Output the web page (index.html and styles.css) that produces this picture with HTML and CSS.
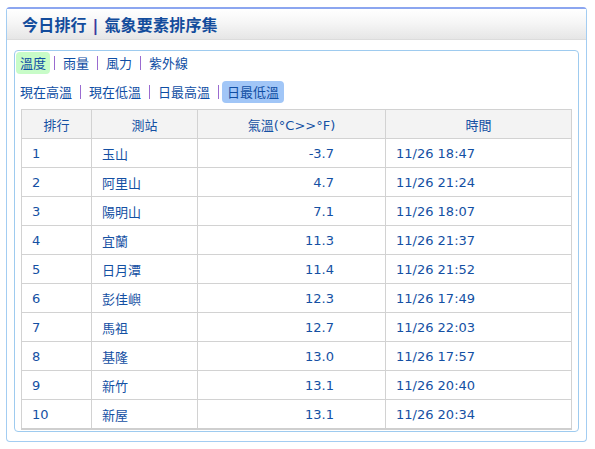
FILE: index.html
```html
<!DOCTYPE html>
<html lang="zh-Hant">
<head>
<meta charset="utf-8">
<title>今日排行</title>
<link rel="stylesheet" href="styles.css">
</head>
<body>
<div class="panel">
  <div class="panel-head">
    <h1 class="title">今日排行 <span class="title-sep">|</span> 氣象要素排序集</h1>
  </div>
  <div class="inner">
    <div class="tabs tabs-main">
      <span class="tab tab-on-green">溫度</span><span class="sep"></span><span class="tab">雨量</span><span class="sep"></span><span class="tab">風力</span><span class="sep"></span><span class="tab">紫外線</span>
    </div>
    <div class="tabs tabs-sub">
      <span class="tab">現在高溫</span><span class="sep"></span><span class="tab">現在低溫</span><span class="sep"></span><span class="tab">日最高溫</span><span class="sep"></span><span class="tab tab-on-blue">日最低溫</span>
    </div>
    <table class="rank">
      <thead>
        <tr><th class="c1">排行</th><th class="c2">測站</th><th class="c3">氣溫(°C&gt;&gt;°F)</th><th class="c4">時間</th></tr>
      </thead>
      <tbody>
        <tr><td>1</td><td>玉山</td><td class="num">-3.7</td><td>11/26 18:47</td></tr>
        <tr><td>2</td><td>阿里山</td><td class="num">4.7</td><td>11/26 21:24</td></tr>
        <tr><td>3</td><td>陽明山</td><td class="num">7.1</td><td>11/26 18:07</td></tr>
        <tr><td>4</td><td>宜蘭</td><td class="num">11.3</td><td>11/26 21:37</td></tr>
        <tr><td>5</td><td>日月潭</td><td class="num">11.4</td><td>11/26 21:52</td></tr>
        <tr><td>6</td><td>彭佳嶼</td><td class="num">12.3</td><td>11/26 17:49</td></tr>
        <tr><td>7</td><td>馬祖</td><td class="num">12.7</td><td>11/26 22:03</td></tr>
        <tr><td>8</td><td>基隆</td><td class="num">13.0</td><td>11/26 17:57</td></tr>
        <tr><td>9</td><td>新竹</td><td class="num">13.1</td><td>11/26 20:40</td></tr>
        <tr><td>10</td><td>新屋</td><td class="num">13.1</td><td>11/26 20:34</td></tr>
      </tbody>
    </table>
  </div>
</div>
</body>
</html>
```

FILE: styles.css
```css
html, body {
  margin: 0;
  padding: 0;
  background: #ffffff;
}

body {
  font-family: "DejaVu Sans", "Noto Sans CJK TC", sans-serif;
  font-size: 13px;
  color: #1450a3;
}

.panel {
  margin: 7px 0 0 6px;
  width: 581px;
  height: 435px;
  box-sizing: border-box;
  border: 1px solid #a3cdf2;
  border-top: 2px solid #8ca6f0;
  border-radius: 4px;
  padding: 0 7px 9px 7px;
  display: flex;
  flex-direction: column;
}

.panel-head {
  flex-shrink: 0;
  margin: 0 -7px;
  height: 30px;
  border-bottom: 1px solid #dcdcdc;
  background: linear-gradient(#ffffff 0%, #f6f6f6 45%, #e6e6e6 100%);
  display: flex;
  align-items: center;
  padding-left: 15px;
}

.title {
  margin: 0;
  font-family: "DejaVu Sans", "Noto Sans CJK TC", sans-serif;
  font-size: 16px;
  font-weight: bold;
  color: #134c9c;
  letter-spacing: 0.2px;
}

.title-sep {
  color: #3a3c9e;
}

.inner {
  margin-top: 10px;
  flex: 1;
  min-height: 0;
  border: 1px solid #9ecbef;
  border-radius: 4px;
  padding: 1px 6px 0 0;
  display: flex;
  flex-direction: column;
}

.tabs {
  flex-shrink: 0;
  display: flex;
  align-items: center;
  height: 22px;
}

.tabs-main {
  margin-top: 0;
  padding-left: 1px;
}

.tabs-sub {
  margin-top: 7px;
}

.tab {
  padding: 0 4px;
  height: 22px;
  line-height: 22px;
  border-radius: 4px;
  color: #0f4ea4;
  font-family: "Noto Sans CJK TC", "DejaVu Sans", sans-serif;
  font-size: 13px;
}

.tabs-sub .tab {
  padding: 0 5px;
}

.tab-on-green {
  background: #c8fcc8;
}

.tab-on-blue {
  background: #a1c6f7;
}

.sep {
  display: inline-block;
  width: 1px;
  height: 14px;
  background: #9a6bd0;
  margin: 0 3px;
}

.tabs-main .sep {
  margin: 0 4px;
}

.rank {
  flex-shrink: 0;
  margin: 6px 0 0 6px;
  width: 551px;
  border-collapse: collapse;
  border: 1px solid #cfcfcf;
  border-bottom-width: 2px;
  table-layout: fixed;
}

.rank th,
.rank td {
  border: 1px solid #d2d2d2;
  height: 28px;
  padding: 0 10px;
  font-size: 13px;
  font-weight: normal;
  color: #1450a3;
  font-family: "DejaVu Sans", "Noto Sans CJK TC", sans-serif;
  white-space: nowrap;
}

.rank th {
  background: #f3f3f3;
  text-align: center;
  padding: 0;
}

.rank td {
  text-align: left;
}

.rank td.num {
  text-align: right;
  padding-right: 51px;
}

.c1 { width: 69px; }
.c2 { width: 105px; }
.c3 { width: 187px; }
.c4 { width: auto; }
```
